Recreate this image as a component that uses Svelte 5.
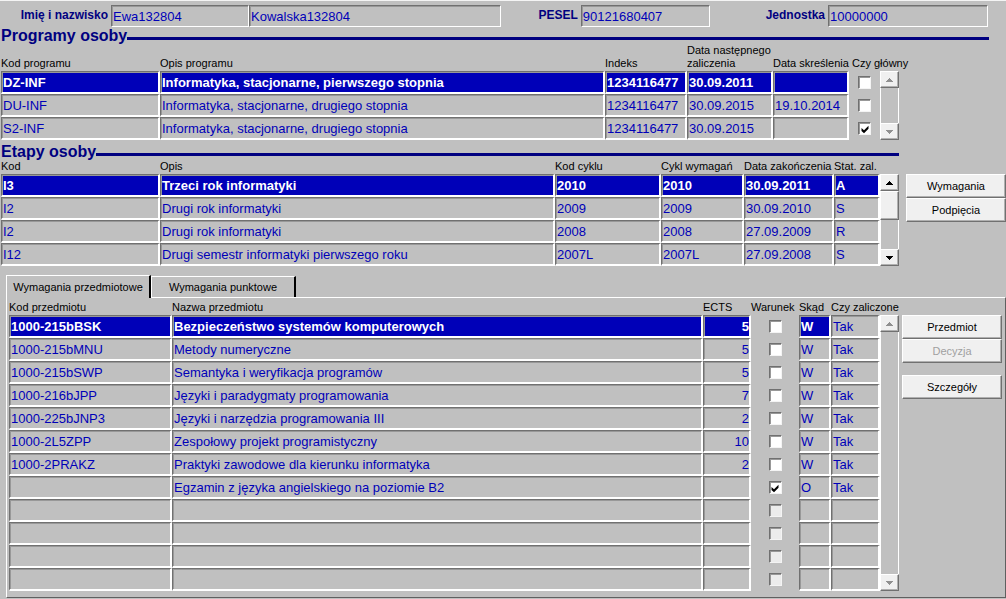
<script lang="ts">
  type Column = {
    key: string;
    label: string;
    width?: number;
    type?: 'text' | 'check';
    align?: 'right';
    plain?: boolean;
  };
  type Row = Record<string, string | boolean>;

  const programColumns: Column[] = [
    { key: 'kod', label: 'Kod programu', width: 159 },
    { key: 'opis', label: 'Opis programu' },
    { key: 'indeks', label: 'Indeks', width: 82 },
    { key: 'zaliczenie', label: 'Data następnego\nzaliczenia', width: 86 },
    { key: 'skreslenie', label: 'Data skreślenia', width: 76 },
    { key: 'glowny', label: 'Czy główny', width: 31, type: 'check' },
  ];

  const programs: Row[] = [
    { kod: 'DZ-INF', opis: 'Informatyka, stacjonarne, pierwszego stopnia', indeks: '1234116477', zaliczenie: '30.09.2011', skreslenie: '', glowny: false },
    { kod: 'DU-INF', opis: 'Informatyka, stacjonarne, drugiego stopnia', indeks: '1234116477', zaliczenie: '30.09.2015', skreslenie: '19.10.2014', glowny: false },
    { kod: 'S2-INF', opis: 'Informatyka, stacjonarne, drugiego stopnia', indeks: '1234116477', zaliczenie: '30.09.2015', skreslenie: '', glowny: true },
  ];

  const stageColumns: Column[] = [
    { key: 'kod', label: 'Kod', width: 159 },
    { key: 'opis', label: 'Opis' },
    { key: 'cykl', label: 'Kod cyklu', width: 106 },
    { key: 'cyklWymagan', label: 'Cykl wymagań', width: 83 },
    { key: 'data', label: 'Data zakończenia', width: 90 },
    { key: 'status', label: 'Stat. zal.', width: 46 },
  ];

  const stages: Row[] = [
    { kod: 'I3', opis: 'Trzeci rok informatyki', cykl: '2010', cyklWymagan: '2010', data: '30.09.2011', status: 'A' },
    { kod: 'I2', opis: 'Drugi rok informatyki', cykl: '2009', cyklWymagan: '2009', data: '30.09.2010', status: 'S' },
    { kod: 'I2', opis: 'Drugi rok informatyki', cykl: '2008', cyklWymagan: '2008', data: '27.09.2009', status: 'R' },
    { kod: 'I12', opis: 'Drugi semestr informatyki pierwszego roku', cykl: '2007L', cyklWymagan: '2007L', data: '27.09.2008', status: 'S' },
  ];

  const courseColumns: Column[] = [
    { key: 'kod', label: 'Kod przedmiotu', width: 163 },
    { key: 'nazwa', label: 'Nazwa przedmiotu' },
    { key: 'ects', label: 'ECTS', width: 48, align: 'right' },
    { key: 'warunek', label: 'Warunek', width: 48, type: 'check' },
    { key: 'skad', label: 'Skąd', width: 32 },
    { key: 'zaliczone', label: 'Czy zaliczone', width: 49, plain: true },
  ];

  const course = (kod: string, nazwa: string, ects: string, skad = 'W', warunek = false): Row => ({
    kod, nazwa, ects, warunek, skad, zaliczone: 'Tak',
  });

  const courses: Row[] = [
    course('1000-215bBSK', 'Bezpieczeństwo systemów komputerowych', '5'),
    course('1000-215bMNU', 'Metody numeryczne', '5'),
    course('1000-215bSWP', 'Semantyka i weryfikacja programów', '5'),
    course('1000-216bJPP', 'Języki i paradygmaty programowania', '7'),
    course('1000-225bJNP3', 'Języki i narzędzia programowania III', '2'),
    course('1000-2L5ZPP', 'Zespołowy projekt programistyczny', '10'),
    course('1000-2PRAKZ', 'Praktyki zawodowe dla kierunku informatyka', '2'),
    course('', 'Egzamin z języka angielskiego na poziomie B2', '', 'O', true),
    {}, {}, {}, {},
  ];

  let selectedProgram = $state(0);
  let selectedStage = $state(0);
  let selectedCourse = $state(0);
  let tab = $state('przedmiotowe');
</script>

{#snippet grid(label: string, columns: Column[], rows: Row[], selected: number, select: (i: number) => void)}
  <table aria-label={label}>
    <colgroup>
      {#each columns as col}
        <col style:width={col.width ? `${col.width}px` : 'auto'} />
      {/each}
    </colgroup>
    <thead>
      <tr>
        {#each columns as col}
          <th scope="col" class:indent={col.key === 'glowny'}>{col.label}</th>
        {/each}
      </tr>
    </thead>
    <tbody>
      {#each rows as row, i}
        <tr class:selected={i === selected}>
          {#each columns as col}
            {#if col.type === 'check'}
              <td class="check">
                <input
                  type="checkbox"
                  aria-label={col.label}
                  checked={!!row[col.key]}
                  disabled={row[col.key] === undefined}
                />
              </td>
            {:else}
              <td>
                <input
                  type="text"
                  class="cell"
                  class:right={col.align === 'right'}
                  class:plain={col.plain}
                  readonly
                  aria-label={col.label}
                  value={row[col.key] ?? ''}
                  onfocus={() => select(i)}
                />
              </td>
            {/if}
          {/each}
        </tr>
      {/each}
    </tbody>
  </table>
{/snippet}

{#snippet scrollbar(rows: number, active: boolean)}
  <div class="scrollbar" style:height="{rows * 23}px">
    <button type="button" class="arrow" disabled={!active} aria-label="W górę">
      <svg width="7" height="4" viewBox="0 0 7 4" shape-rendering="crispEdges"><path d="M3 0h1v1h1v1h1v1h1v1H0V3h1V2h1V1h1z" /></svg>
    </button>
    {#if active}
      <div class="thumb"></div>
    {/if}
    <button type="button" class="arrow down" disabled={!active} aria-label="W dół">
      <svg width="7" height="4" viewBox="0 0 7 4" shape-rendering="crispEdges"><path d="M0 0h7v1H6v1H5v1H4v1H3V3H2V2H1V1H0z" /></svg>
    </button>
  </div>
{/snippet}

<main>
  <form class="person">
    <label class="first" for="imie">Imię i nazwisko</label>
    <input id="imie" class="field name" type="text" readonly value="Ewa132804" />
    <input class="field surname" type="text" readonly aria-label="Nazwisko" value="Kowalska132804" />
    <label class="second" for="pesel">PESEL</label>
    <input id="pesel" class="field pesel" type="text" readonly value="90121680407" />
    <label class="third" for="jednostka">Jednostka</label>
    <input id="jednostka" class="field unit" type="text" readonly value="10000000" />
  </form>

  <section class="programs">
    <h2>Programy osoby</h2>
    <div class="block">
      {@render grid('Programy osoby', programColumns, programs, selectedProgram, (i) => (selectedProgram = i))}
      {@render scrollbar(3, false)}
      <div class="side"></div>
    </div>
  </section>

  <section class="stages">
    <h2>Etapy osoby</h2>
    <div class="block">
      {@render grid('Etapy osoby', stageColumns, stages, selectedStage, (i) => (selectedStage = i))}
      {@render scrollbar(4, true)}
      <div class="side">
        <button type="button" class="action">Wymagania</button>
        <button type="button" class="action">Podpięcia</button>
      </div>
    </div>
  </section>

  <div class="tabs" role="tablist">
    <button type="button" role="tab" aria-selected={tab === 'przedmiotowe'} onclick={() => (tab = 'przedmiotowe')}>
      Wymagania przedmiotowe
    </button>
    <button type="button" role="tab" aria-selected={tab === 'punktowe'} onclick={() => (tab = 'punktowe')}>
      Wymagania punktowe
    </button>
  </div>
  <section class="panel" role="tabpanel">
    <div class="block">
      {@render grid('Wymagania przedmiotowe', courseColumns, courses, selectedCourse, (i) => (selectedCourse = i))}
      {@render scrollbar(12, false)}
      <div class="side">
        <button type="button" class="action">Przedmiot</button>
        <button type="button" class="action" disabled>Decyzja</button>
        <button type="button" class="action apart">Szczegóły</button>
      </div>
    </div>
  </section>
</main>

<style>
  :global(body) {
    background: #c0c0c0;
  }

  main {
    box-sizing: border-box;
    border-top: 1px solid #f4f4f4;
    background: #c0c0c0;
    color: #000;
    font-family: 'Liberation Sans', Arial, sans-serif;
    font-size: 11px;
  }

  input,
  button {
    box-sizing: border-box;
    margin: 0;
    font-family: inherit;
    border-radius: 0;
  }

  .person {
    display: flex;
    align-items: center;
    padding: 4px 18px 0 0;
    color: #000080;
    font-size: 12px;
    font-weight: bold;
  }

  .person label {
    flex-basis: 0;
    text-align: right;
    padding: 0 3px 2px 0;
    white-space: nowrap;
  }

  .person .first {
    flex: 0 0 108px;
  }

  .second {
    flex-grow: 2;
  }

  .third {
    flex-grow: 3;
  }

  .field,
  .cell {
    display: block;
    min-width: 0;
    padding: 0 1px;
    border: 1px solid;
    border-color: #707070 #fff #fff #707070;
    box-shadow: inset 1px 1px #989898;
    background: #c0c0c0;
    color: #0000b8;
    font-size: 13px;
    outline: none;
  }

  .field {
    height: 22px;
  }

  .cell {
    width: 100%;
    height: 23px;
    border-right-width: 2px;
    border-bottom-width: 2px;
  }

  .name {
    width: 138px;
  }

  .surname {
    width: 252px;
  }

  .pesel {
    width: 129px;
  }

  .unit {
    width: 160px;
  }

  h2 {
    display: flex;
    align-items: center;
    margin: 0 0 0 1px;
    font-size: 16px;
    line-height: 17px;
    color: #000080;
  }

  h2::after {
    content: '';
    flex: 1;
    height: 3px;
    margin-top: 5px;
    background: #000080;
  }

  .programs h2 {
    margin-right: 17px;
  }

  .stages {
    padding-top: 3px;
  }

  .stages h2 {
    margin-right: 107px;
  }

  .block {
    display: flex;
    align-items: flex-end;
    padding-left: 1px;
  }

  table {
    flex: 1 1 0;
    width: 100%;
    min-width: 0;
    table-layout: fixed;
    border-collapse: collapse;
  }

  th {
    padding: 0 0 1px;
    font-weight: normal;
    line-height: 13px;
    text-align: left;
    vertical-align: bottom;
    white-space: pre;
  }

  .indent {
    padding-left: 3px;
  }

  td {
    padding: 0;
    height: 23px;
    vertical-align: top;
  }

  .selected .cell:not(.plain) {
    background: #0000b8;
    color: #fff;
    font-weight: bold;
  }

  .right {
    padding: 0;
    text-align: right;
  }

  .check {
    vertical-align: middle;
  }

  input[type='checkbox'] {
    appearance: none;
    display: block;
    width: 13px;
    height: 13px;
    margin: 0 auto;
    border: 1px solid;
    border-color: #707070 #f4f4f4 #f4f4f4 #707070;
    box-shadow: inset 1px 1px #989898;
    background: #fff;
  }

  input[type='checkbox']:checked {
    background: #fff url("data:image/svg+xml,%3Csvg xmlns='http://www.w3.org/2000/svg' viewBox='0 0 10 10'%3E%3Cpath d='M1.5 4v3L4 9.2 8.5 4.7v-3L4 6.2z'/%3E%3C/svg%3E") center / 10px 10px no-repeat;
  }

  input[type='checkbox']:disabled {
    background: #ececec;
  }

  .scrollbar {
    box-sizing: border-box;
    display: flex;
    flex-direction: column;
    width: 19px;
    border-left: 1px solid #fff;
    border-right: 1px solid #fff;
  }

  .arrow,
  .thumb,
  .action {
    border: 1px solid;
    border-color: #fff #707070 #707070 #fff;
    background: #f0f0f0;
    box-shadow: inset -1px -1px #b0b0b0;
  }

  .arrow {
    display: flex;
    align-items: center;
    justify-content: center;
    width: 19px;
    height: 17px;
    margin-left: -1px;
    padding: 0;
  }

  .arrow:disabled path {
    fill: #909090;
  }

  .down {
    margin-top: auto;
  }

  .thumb {
    box-sizing: border-box;
    width: 19px;
    height: 29px;
    margin-left: -1px;
  }

  .side {
    align-self: stretch;
    display: flex;
    flex-direction: column;
    flex-shrink: 0;
    width: 100px;
    padding: 14px 0 0 7px;
  }

  .action {
    height: 24px;
    padding: 0;
    font-size: 11px;
    color: #000;
  }

  .action:disabled {
    color: #a0a0a0;
  }

  .apart {
    margin-top: 12px;
  }

  .tabs {
    display: flex;
    align-items: flex-end;
    padding: 9px 0 0 6px;
  }

  .tabs button {
    width: 145px;
    height: 21px;
    padding: 0;
    border: 1px solid #fff;
    border-right: 2px solid #000;
    border-bottom: 0;
    background: #c0c0c0;
    font-size: 11px;
    color: #000;
  }

  .tabs button[aria-selected='true'] {
    z-index: 1;
    height: 23px;
    margin-bottom: -1px;
  }

  .panel {
    margin-left: 6px;
    padding: 3px 3px 6px 1px;
    border: 1px solid;
    border-color: #fff #606060 #606060 #fff;
  }

  .panel .side {
    padding-left: 3px;
  }
</style>
